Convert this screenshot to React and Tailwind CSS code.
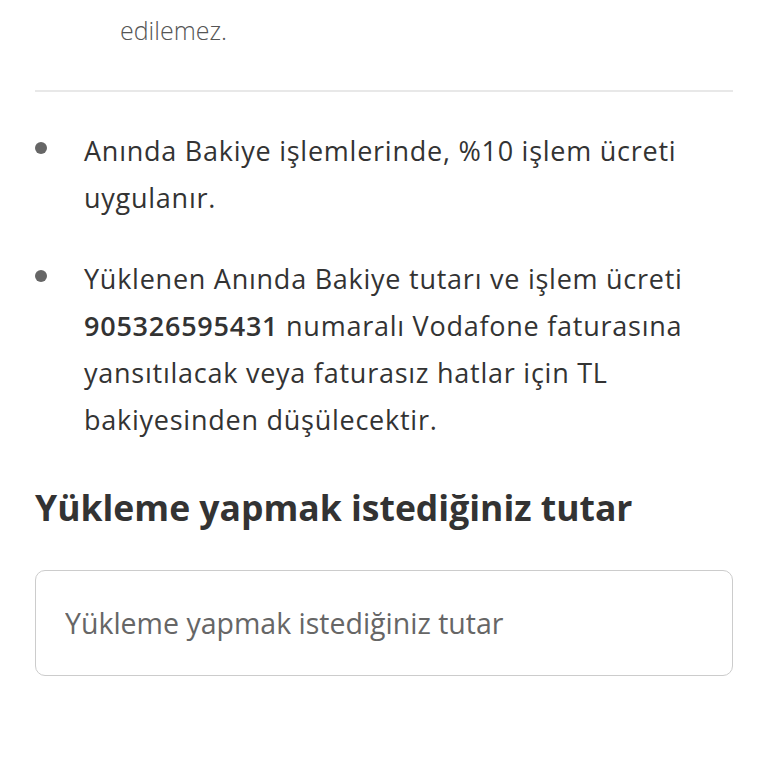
import React from "react";

const font = { fontFamily: "'Open Sans', Lato, sans-serif" };

function Bullet({ children }) {
  return (
    <li className="flex">
      <span className="w-[49px] shrink-0 flex pt-[15px]">
        <span className="h-3 w-3 rounded-full bg-[#666666]" />
      </span>
      <p className="text-[27px] leading-[47px] tracking-[0.75px] text-[#333333] whitespace-nowrap">
        {children}
      </p>
    </li>
  );
}

export default function App() {
  return (
    <div className="h-[768px] overflow-hidden bg-white" style={font}>
      <div className="-mt-[43px] px-[35px]">
        <p className="pl-[85px] text-[25px] leading-[49px] font-light text-[#555555] whitespace-nowrap">
          Bakiye yüklemesi yapıldıktan sonra iptal veya iade
          <br />
          edilemez.
        </p>
        <div className="mt-[35px] h-[2px] bg-[#e8e8e8]" />
        <ul className="mt-[35px] flex flex-col gap-[34px]">
          <Bullet>
            Anında Bakiye işlemlerinde, %10 işlem ücreti
            <br />
            uygulanır.
          </Bullet>
          <Bullet>
            Yüklenen Anında Bakiye tutarı ve işlem ücreti
            <br />
            <span className="font-semibold">905326595431</span> numaralı Vodafone faturasına
            <br />
            yansıtılacak veya faturasız hatlar için TL
            <br />
            bakiyesinden düşülecektir.
          </Bullet>
        </ul>
        <h2 className="mt-[40px] text-[35.5px] leading-[48px] font-bold text-[#333333]">
          Yükleme yapmak istediğiniz tutar
        </h2>
        <input
          className="mt-[39px] block w-full h-[106px] rounded-[10px] border-[1.5px] border-[#cccccc] px-[29px] text-[28.5px] text-[#333333] placeholder:text-[#666666] outline-none"
          placeholder="Yükleme yapmak istediğiniz tutar"
        />
      </div>
    </div>
  );
}
